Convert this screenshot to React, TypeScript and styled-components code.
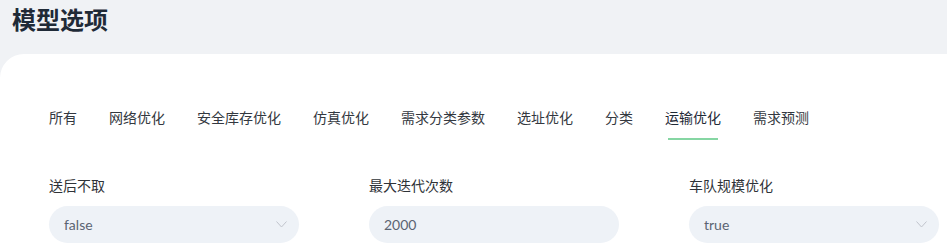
import React from "react";
import styled, { createGlobalStyle } from "styled-components";

const Global = createGlobalStyle`
  html, body { margin: 0; padding: 0; background: #f0f2f5; }
  body { font-family: Lato, "Noto Sans CJK SC", sans-serif; }
`;

const Page = styled.div`
  display: flex;
  flex-direction: column;
  min-height: 246px;
`;

const Title = styled.h1`
  margin: 0;
  padding: 3px 0 0 12px;
  height: 50px;
  box-sizing: border-box;
  font-family: "Noto Sans CJK SC", sans-serif;
  font-size: 24px;
  line-height: 32px;
  font-weight: 700;
  color: #1f2a37;
`;

const Card = styled.div`
  flex: 1;
  margin-top: 4px;
  background: #ffffff;
  border-top-left-radius: 24px;
  padding: 53px 0 0 49px;
`;

const Tabs = styled.div`
  display: flex;
  gap: 32px;
`;

const Tab = styled.div<{ $active?: boolean }>`
  display: flex;
  flex-direction: column;
  align-items: center;
  font-family: "Noto Sans CJK SC", sans-serif;
  font-size: 14px;
  line-height: 20px;
  color: ${(p) => (p.$active ? "#1f2a37" : "#333840")};
`;

const Underline = styled.div<{ $active?: boolean }>`
  margin: 11px -25px 0;
  width: 50px;
  height: 2px;
  background: ${(p) => (p.$active ? "#86d6a3" : "transparent")};
`;

const Form = styled.div`
  display: grid;
  grid-template-columns: repeat(3, 250px);
  column-gap: 70px;
  margin-top: 35px;
`;

const Field = styled.div`
  display: flex;
  flex-direction: column;
  gap: 11px;
`;

const Label = styled.div`
  font-family: "Noto Sans CJK SC", sans-serif;
  font-size: 14px;
  line-height: 20px;
  color: #2f3338;
`;

const Input = styled.div`
  display: flex;
  align-items: center;
  justify-content: space-between;
  height: 37px;
  border-radius: 19px;
  background: #eef2f7;
  padding: 0 12px 0 15px;
  box-sizing: border-box;
  font-family: Lato, sans-serif;
  font-size: 14px;
  color: #5b6472;
`;

const Chevron = () => (
  <svg width="11" height="7" viewBox="0 0 11 7" fill="none">
    <path d="M0.5 0.5 L5.5 6 L10.5 0.5" stroke="#c0c4cc" strokeWidth="1" />
  </svg>
);

const tabs = ["所有", "网络优化", "安全库存优化", "仿真优化", "需求分类参数", "选址优化", "分类", "运输优化", "需求预测"];

const fields = [
  { label: "送后不取", value: "false", select: true },
  { label: "最大迭代次数", value: "2000", select: false },
  { label: "车队规模优化", value: "true", select: true },
];

export default function App() {
  return (
    <Page>
      <Global />
      <Title>模型选项</Title>
      <Card>
        <Tabs>
          {tabs.map((t) => (
            <Tab key={t} $active={t === "运输优化"}>
              {t}
              <Underline $active={t === "运输优化"} />
            </Tab>
          ))}
        </Tabs>
        <Form>
          {fields.map((f) => (
            <Field key={f.label}>
              <Label>{f.label}</Label>
              <Input>
                <span>{f.value}</span>
                {f.select && <Chevron />}
              </Input>
            </Field>
          ))}
        </Form>
      </Card>
    </Page>
  );
}
